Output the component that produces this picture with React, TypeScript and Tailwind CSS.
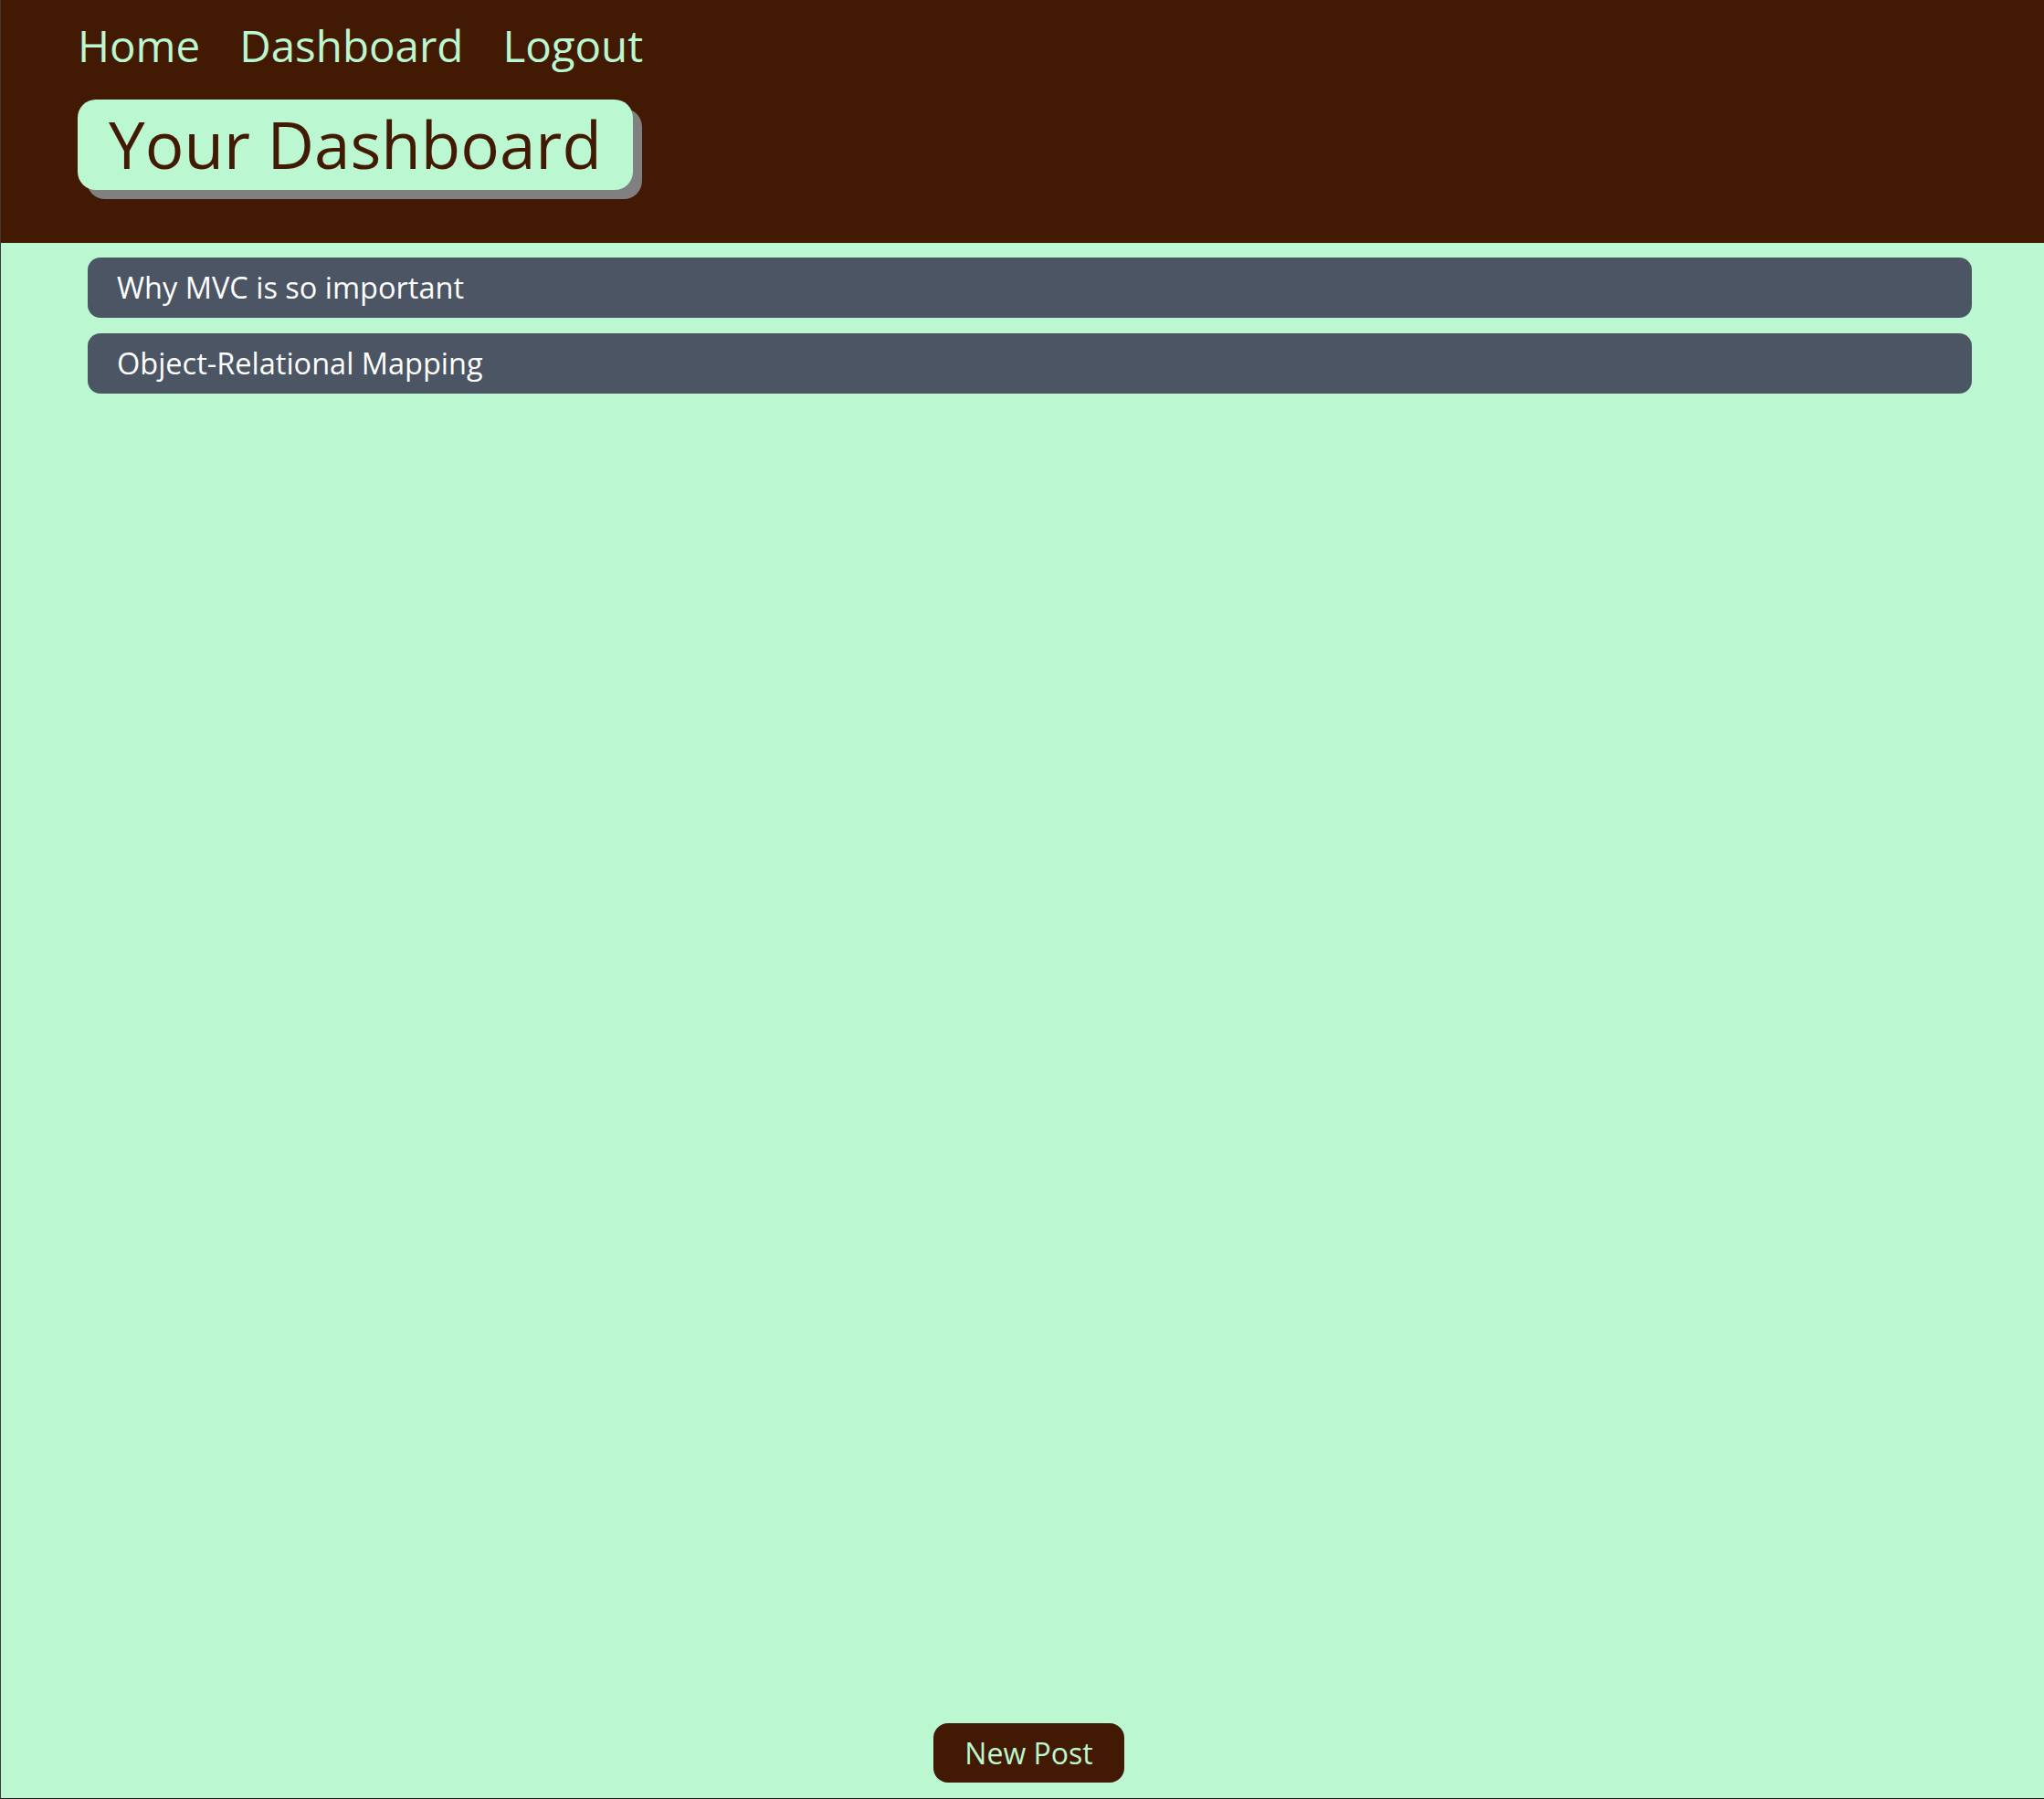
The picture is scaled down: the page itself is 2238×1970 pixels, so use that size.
const posts = [
  { id: 1, title: "Why MVC is so important" },
  { id: 2, title: "Object-Relational Mapping" },
];

export default function App() {
  return (
    <div className="h-[1970px] flex flex-col bg-[#bbf7d0] border-l border-b border-l-[#3a3a3a] border-b-[#1a1a1a] font-['Open_Sans',sans-serif]">
      {/* Header */}
      <header className="h-[266px] shrink-0 bg-[#421a03] pl-[84px] pt-[26px]">
        <nav className="flex gap-[43px] text-[47.5px] leading-none text-[#bbf7d0]">
          <a href="#">Home</a>
          <a href="#">Dashboard</a>
          <a href="#">Logout</a>
        </nav>
        <h1 className="mt-[35px] inline-block h-[99px] rounded-[20px] bg-[#bbf7d0] px-[34px] text-[71px] leading-[97px] text-[#421a03] shadow-[10px_10px_0_#808080]">
          Your Dashboard
        </h1>
      </header>

      {/* Posts */}
      <main className="flex-1 flex flex-col gap-[17px] pt-4 pl-[95px] pr-[79px]">
        {posts.map((post) => (
          <a
            key={post.id}
            href="#"
            className="flex h-[66px] items-center rounded-[14px] bg-[#4b5563] px-8 text-[32.5px] text-white"
          >
            {post.title}
          </a>
        ))}
      </main>

      <div className="flex justify-center pb-[17px] pl-[14px]">
        <button className="h-[65px] rounded-[16px] bg-[#421a03] px-[34px] text-[32px] text-[#bbf7d0]">
          New Post
        </button>
      </div>
    </div>
  );
}
